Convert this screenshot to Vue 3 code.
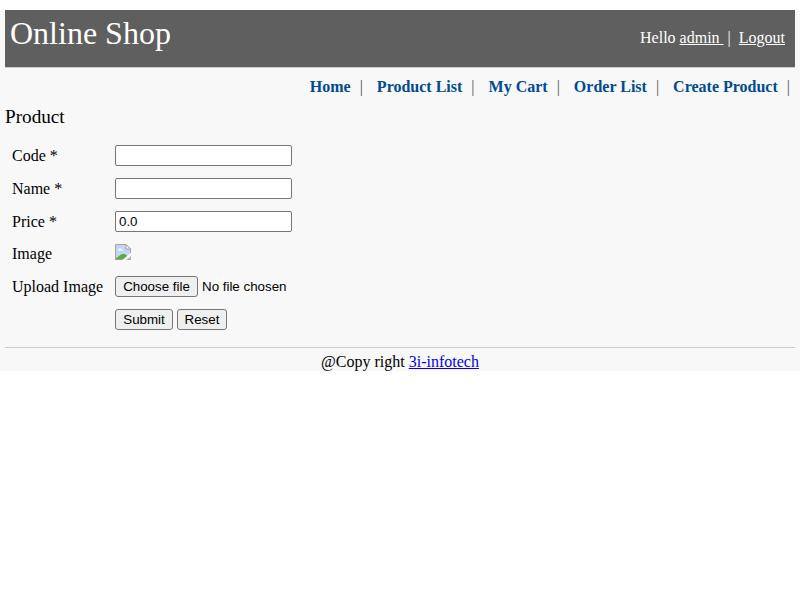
<script setup>
import { ref } from 'vue'

const menu = ['Home', 'Product List', 'My Cart', 'Order List', 'Create Product']
const code = ref('')
const name = ref('')
const price = ref('0.0')
</script>

<template>
  <div class="page">
    <header class="header">
      <div class="site-name">Online Shop</div>
      <div class="account">Hello <a href="#">admin&nbsp;</a>&nbsp;|&nbsp; <a href="#">Logout</a></div>
    </header>

    <nav class="menu">
      <div v-for="item in menu" :key="item" class="menu-item"><a href="#">{{ item }}</a><span>|</span></div>
    </nav>

    <h1 class="page-title">Product</h1>

    <form class="form" @submit.prevent>
      <div class="row">
        <label>Code *</label>
        <input v-model="code" class="text" type="text" />
      </div>
      <div class="row">
        <label>Name *</label>
        <input v-model="name" class="text" type="text" />
      </div>
      <div class="row">
        <label>Price *</label>
        <input v-model="price" class="text" type="text" />
      </div>
      <div class="row image-row">
        <label>Image</label>
        <svg class="broken" width="16" height="16" viewBox="0 0 16 16">
          <path d="M.5 .5H11L15.500 5V15.500H.5Z" fill="#c3d5f6" stroke="#a3a3a3" />
          <path d="M3 6.500V5.500H4V4.500H6V5.500H8V6.500Z" fill="#fff" />
          <path d="M1 15V14C4 13 5 10 8 10C10 10 12 11 13 13L14 15Z" fill="#5bae35" />
          <path d="M11 .5V5H15.500Z" fill="#fff" stroke="#a3a3a3" />
          <path d="M16 8.500L7.500 16H11.500L16 12Z" fill="#f8f8f8" />
        </svg>
      </div>
      <div class="row">
        <label>Upload Image</label>
        <button class="btn choose" type="button">Choose file</button>
        <span class="file-name">No file chosen</span>
      </div>
      <div class="row">
        <label></label>
        <button class="btn submit" type="submit">Submit</button>
        <button class="btn reset" type="reset">Reset</button>
      </div>
    </form>

    <footer class="footer">@Copy right <a href="#">3i-infotech</a></footer>
  </div>
</template>

<style>
body {
  margin: 0;
  background: #fff;
}
</style>

<style scoped>
.page {
  box-sizing: border-box;
  width: 800px;
  height: 361px;
  margin-top: 10px;
  padding: 0 5px;
  background: #f8f8f8;
  color: #000;
  font: 16px/18px "Liberation Serif", "Times New Roman", serif;
}
.header {
  display: flex;
  justify-content: space-between;
  box-sizing: border-box;
  height: 58px;
  padding: 5px 10px 0 5px;
  border-bottom: 1px solid #ccc;
  background: #5f5f5f;
  color: #fff;
}
.site-name {
  font-size: 32px;
  line-height: 37px;
}
.account {
  padding-top: 14px;
}
.account a {
  color: #fff;
}
.menu {
  display: flex;
  justify-content: flex-end;
  gap: 14px;
  height: 38px;
  padding: 10px 5px 0 0;
  box-sizing: border-box;
}
.menu-item {
  display: flex;
  gap: 9px;
  color: #555;
}
.menu a {
  color: #004b91;
  font-weight: bold;
  text-decoration: none;
}
.page-title {
  margin: 0;
  font-size: 19.2px;
  line-height: 22px;
  font-weight: normal;
}
.form {
  padding: 11px 0 0 7px;
}
.row {
  display: flex;
  align-items: center;
  height: 33px;
}
.row label {
  width: 103px;
  padding-top: 1px;
}
.image-row {
  align-items: flex-start;
  box-sizing: border-box;
  height: 32px;
  padding-top: 6px;
}
.text {
  box-sizing: border-box;
  width: 177px;
  height: 21px;
  margin: 0;
  padding: 1px 3px;
  border: 1px solid #767676;
  border-radius: 2px;
  background: #fff;
  color: #000;
  font: 13.333px "Liberation Sans", Arial, sans-serif;
}
.btn {
  box-sizing: border-box;
  height: 21px;
  margin: 0 4px 0 0;
  padding: 0;
  border: 1px solid #767676;
  border-radius: 3px;
  background: #efefef;
  color: #000;
  font: 13.333px "Liberation Sans", Arial, sans-serif;
}
.choose {
  width: 83px;
}
.submit {
  width: 58px;
}
.reset {
  width: 50px;
}
.file-name {
  font: 13.333px "Liberation Sans", Arial, sans-serif;
}
.footer {
  margin-top: 11px;
  padding-top: 5px;
  border-top: 1px solid #ccc;
  text-align: center;
}
.footer a {
  color: #0000ee;
}
</style>
